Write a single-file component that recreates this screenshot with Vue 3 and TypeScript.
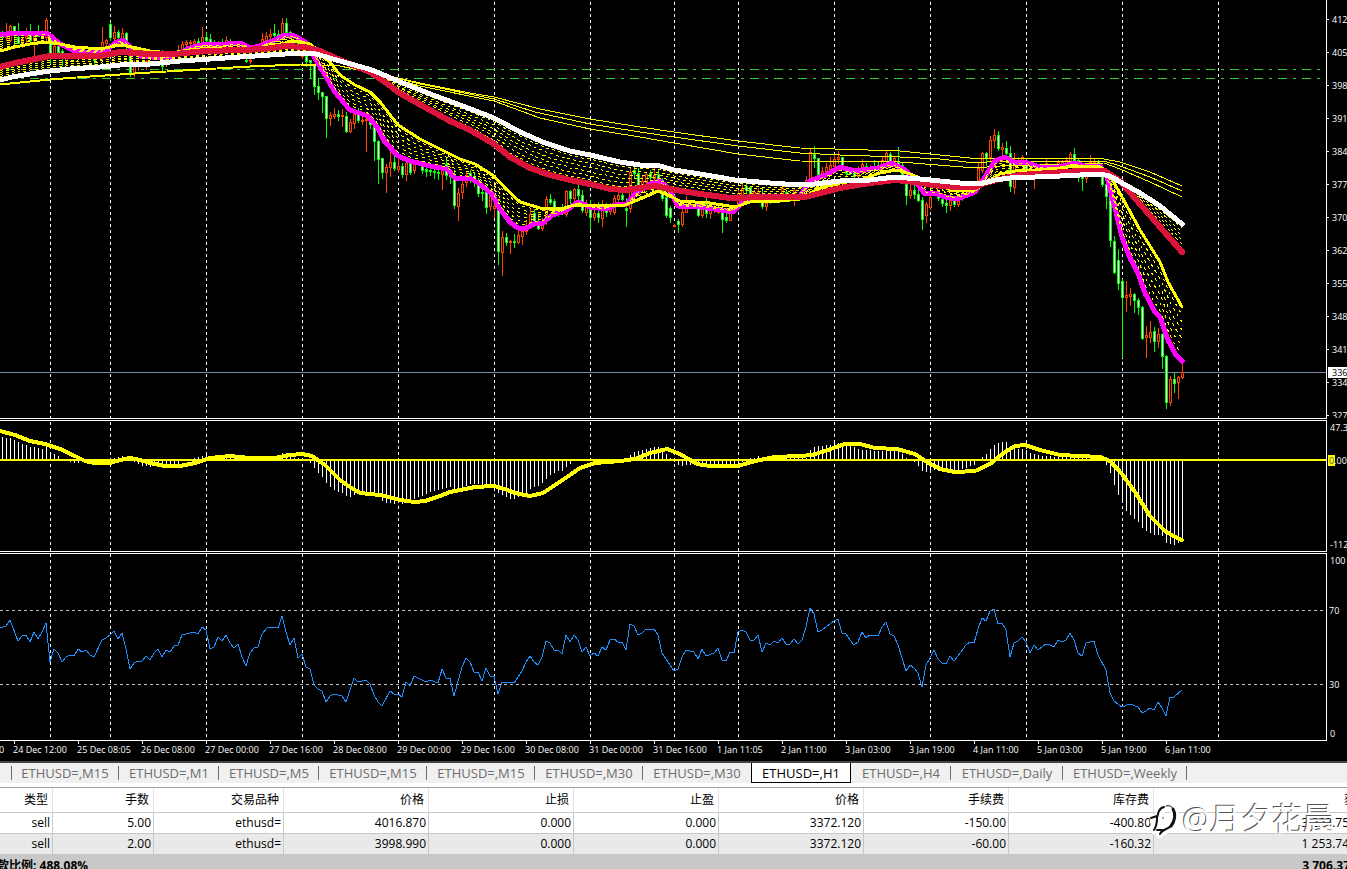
<script setup lang="ts">
type Point = [number, number]

const parse = (source: string): Point[] =>
  source.trim().split(/\s+/).map((pair) => pair.split(',').map(Number) as Point)

const valueAt = (points: Point[], x: number): number => {
  for (let i = 1; i < points.length; i++) {
    const [x0, y0] = points[i - 1]
    const [x1, y1] = points[i]
    if (x <= x1) return y0 + ((y1 - y0) * (x - x0)) / (x1 - x0)
  }
  return points[points.length - 1][1]
}

const toLine = (points: Point[]): string => points.map(([x, y]) => `${x},${y}`).join(' ')

const between = (a: Point[], b: Point[], share: number): string => {
  const points: Point[] = []
  for (let x = 0; x <= 1182; x += x === 0 ? 2 : 4) {
    const ya = valueAt(a, x)
    points.push([x, Math.round(ya + (valueAt(b, x) - ya) * share)])
  }
  return toLine(points)
}

const sessions = [50, 110, 206, 302, 398, 494, 590, 674, 738, 834, 930, 1026, 1122, 1218]

const white = parse(`0,80 12,77 30,74 50,71 70,69 100,67 120,65 150,64 180,61 210,59 240,57 270,55 300,53 316,54 340,61 372,70
398,81 430,94 460,105 494,118 520,132 545,143 570,151 590,155 620,162 640,165 660,166 674,170 700,174 735,180 770,183 800,185
815,184 840,181 870,180 895,177 920,179 940,181 960,183 980,184 995,180 1010,178 1060,176 1100,174 1110,176 1122,183 1140,193 1160,206 1182,224`)
const red = parse(`0,67 15,63 30,60 50,56 100,56 120,52 150,54 175,54 205,51 240,50 265,49 285,46 305,47 320,51 340,60 370,72 385,82
398,92 410,99 430,110 450,121 470,130 494,144 510,157 530,168 550,175 570,180 590,184 610,189 625,190 640,188 655,186 670,189
700,194 730,198 765,197 805,197 825,192 840,188 870,183 895,180 915,182 940,186 960,187 975,187 985,183 1000,179 1020,175
1050,173 1080,171 1105,171 1120,181 1140,204 1160,227 1182,252`)
const yellow = parse(`0,51 15,47 30,44 45,42 60,44 75,47 100,49 120,45 132,47 150,51 170,53 190,50 205,49 230,48 260,48 280,44
295,41 310,44 320,52 330,62 340,75 355,85 370,92 380,102 398,125 420,139 440,149 460,159 475,164 494,176 505,188 520,202 540,208
560,209 575,205 590,205 610,206 625,205 645,197 658,191 672,197 680,201 710,203 735,207 750,202 780,201 800,199 820,188 840,183
860,180 880,173 897,170 910,174 925,180 940,185 950,190 960,191 975,190 985,183 1000,174 1015,171 1035,170 1060,168 1075,166
1100,167 1108,172 1122,197 1140,230 1160,262 1168,282 1182,307`)
const magenta = parse(`0,35 15,33 30,34 47,33 60,44 75,51 95,53 108,49 115,43 123,40 128,45 140,56 165,58 175,55 190,48 205,44
215,45 240,43 250,48 260,46 275,40 285,35 293,35 305,42 313,55 325,75 335,92 350,110 368,116 378,128 385,142 398,156 410,161
430,166 447,169 455,178 470,178 480,184 492,194 500,209 510,222 518,228 527,228 535,223 543,223 552,215 565,211 578,202 590,207
607,209 615,205 627,204 635,194 650,184 660,181 668,188 678,206 700,207 715,209 733,212 745,200 770,198 800,196 810,181 828,174
840,167 855,171 878,168 892,163 905,170 915,181 925,194 935,193 945,197 957,199 975,192 985,177 995,161 1005,157 1015,163
1025,162 1040,167 1055,168 1075,163 1085,166 1100,166 1107,177 1115,208 1122,237 1130,258 1138,273 1145,293 1155,312 1160,317
1168,340 1176,355 1182,361`)

const slowLines = [
  `0,84 30,81 50,79 90,76 150,73 200,70 250,67 300,64 340,66 385,75 420,83 470,93 494,97 540,109 590,119 640,127 674,132 738,141
800,148 835,149 900,151 940,155 970,158 1030,158 1104,159 1120,162 1150,172 1182,186`,
  `0,84 30,81 50,79 90,76 150,72 200,69 250,66 300,64 340,66 385,75 420,84 494,99 535,112 590,124 640,132 674,137 738,146 800,153
840,155 900,157 940,159 975,163 1000,161 1104,161 1120,166 1150,177 1182,191`,
  `0,85 30,82 50,80 90,77 150,73 200,70 250,67 300,65 340,66 385,76 420,86 494,101 540,118 590,129 640,137 674,143 738,154 800,161
900,162 975,168 1000,166 1104,163 1120,169 1150,182 1182,197`,
].map((source) => toLine(parse(source)))

const fastRibbon = [1, 2, 3, 4, 5, 6].map((n) => between(magenta, yellow, n / 7))
const slowRibbon = [1, 2, 3, 4, 5, 6].map((n) => between(white, red, n / 7))

// x, direction, high, body top, body bottom, low
const candles = `2g31,33,37,38 6r23,34,37,40 10r25,26,40,41 14g26,26,35,45 18g23,37,43,43 22r37,39,43,47 26r28,36,38,42 30g24,34,40,43
34r32,32,40,55 38g25,32,36,36 42r30,31,37,38 46r18,20,37,40 50g38,40,56,63 54r45,46,56,57 58g42,46,52,54 62g49,51,56,65 66r55,56,60,65
94g55,56,60,65 102r27,42,50,50 106r39,40,43,46 110g22,24,37,40 114r26,32,38,42 118g30,32,37,41 122r28,33,39,42 126g32,33,42,48
130g50,56,72,76 134r60,66,72,76 138r60,62,66,70 146r60,61,66,69 162g50,60,66,72 166r60,60,63,66 178r45,50,53,55 182r41,44,50,53
186r40,42,44,48 190r40,42,43,45 194r39,41,43,46 198g38,41,43,46 202r27,37,43,57 206g32,37,40,44 210g34,39,43,46 214g40,42,44,44
218r41,42,44,45 222g39,42,44,44 226r36,40,44,46 230g39,41,44,44 246g55,60,61,62 250r55,60,61,63 262r33,39,46,48 266r32,36,40,44
270r29,34,36,39 274g24,33,35,37 278g30,34,35,37 282r18,23,34,38 286g18,23,32,35 290g31,32,36,37 294r34,35,37,38 298g35,36,50,54
302r50,52,56,58 306g53,56,61,66 310g60,60,62,77 314g65,65,86,94 318g79,86,92,99 322g92,92,96,112 326g96,96,118,137 330r112,115,118,125
334r108,114,116,118 338g110,114,116,120 342r109,115,116,126 346g112,116,131,132 350r119,122,131,132 354r112,114,123,128
358g108,112,120,122 362r117,120,121,124 366r117,119,120,151 370g118,120,124,128 374g124,124,141,160 378g140,141,159,183
382g158,158,172,178 386r164,167,172,192 390r150,162,167,176 394g153,162,168,170 398r158,166,169,172 402g163,166,174,177
406r160,163,174,180 410g160,163,172,174 414r160,163,170,173 418r160,161,163,164 422g163,166,170,173 426g165,169,171,176
430g168,170,171,175 434g166,171,172,178 438g165,172,173,179 442r168,170,174,189 446g158,164,175,179 450g170,172,176,183
454g170,179,205,208 458r188,193,206,220 462r178,184,192,198 466r171,175,182,186 470g170,173,177,182 474g172,176,182,186
478g178,180,193,196 482g186,192,193,200 486g188,192,207,213 490r190,195,206,210 494r198,206,208,217 498g200,210,251,264
502r231,237,252,275 506g233,237,242,245 510r240,241,242,253 514g234,241,242,247 518r228,235,242,243 522r226,231,236,244
526r221,225,231,234 530r208,214,222,225 534g209,213,224,226 538g215,225,228,229 542r218,222,228,230 546r196,199,220,224
550g194,199,202,204 554g199,201,212,215 558g208,210,213,216 562g204,210,213,214 566r190,191,214,216 570g190,191,198,203
574r188,189,198,203 578g185,189,195,200 582g190,195,210,212 586r200,205,212,215 590g200,205,217,229 594r203,213,217,220
598g202,213,217,222 602r200,205,218,226 606g203,208,212,216 610r203,208,211,214 614r195,198,212,214 618r190,195,199,201
622g192,195,199,200 626g198,208,210,226 630r167,172,208,212 634g166,170,173,178 638g168,173,185,187 642r176,181,184,186
646r172,174,182,187 650g170,173,177,180 654r168,175,178,180 658g170,174,182,183 662g178,180,198,200 666g194,197,215,217
670g206,208,217,222 674r224,225,226,226 678g219,221,224,232 682r205,212,224,226 686r196,205,212,212 698g206,207,215,216
702r202,207,215,217 706g194,204,213,217 710r207,210,213,218 714r204,207,210,212 718r208,209,212,213 722g209,212,219,232
726g213,217,220,222 730r211,213,220,220 734r205,208,212,213 738r190,193,203,206 742r184,188,200,202 746g184,186,190,192
750g186,187,200,202 754r190,192,196,200 758r188,191,196,200 762g188,200,206,208 766r200,203,206,210 770g195,197,201,203
782r183,188,194,196 786g190,192,195,196 794r188,190,198,205 806r176,180,188,190 810r148,152,184,186 814g146,154,158,167
818g158,158,174,176 822r167,171,174,176 826r163,167,171,174 830r157,165,169,172 834r154,159,166,169 838r151,157,159,163
842g157,157,166,168 846g168,170,173,175 850g168,170,173,174 854g172,173,176,178 858r166,170,176,178 862r159,164,168,171
866g163,166,168,171 870r165,167,170,171 874g160,166,170,171 878g162,165,168,169 882r156,160,168,170 886r150,153,161,164
890g152,154,164,166 894r156,158,162,163 898g147,162,164,165 902g163,165,174,176 906g182,184,195,204 910r184,190,195,198
914g184,190,194,198 918g190,194,200,201 922g197,200,219,229 926r202,204,215,222 930r195,197,207,209 938g190,194,198,200
942g195,199,203,206 946g200,203,205,212 950r196,200,205,210 954g196,200,204,206 958r195,201,204,206 962r190,194,198,200
970r182,184,188,190 978r163,168,180,182 982r152,153,170,172 986g152,153,157,165 990r136,140,157,160 994r129,135,140,147
998g131,135,148,150 1002r143,147,149,154 1006g141,148,153,157 1010g146,153,186,191 1014r153,161,187,193 1018r157,160,164,165
1022r155,157,160,166 1026g158,162,170,172 1030g168,172,174,176 1034r170,172,178,188 1046r159,163,166,168 1054g166,168,171,172
1058r160,162,166,168 1062r160,162,165,166 1066r157,160,164,166 1070r152,154,162,165 1074g148,154,160,163 1078g158,160,175,181
1082g168,174,178,190 1086r170,174,178,182 1090r155,162,168,170 1094r158,161,162,166 1098g160,161,168,170 1102g170,174,184,186
1106g184,184,196,208 1110g195,196,240,246 1114g236,241,272,273 1118g249,260,283,289 1122g279,281,297,357 1126r281,295,297,311
1130r288,294,296,305 1134g293,294,300,312 1138g298,300,307,314 1142g306,307,338,339 1146r326,335,337,357 1150r321,332,337,342
1154g327,331,341,351 1158r328,334,341,347 1162g333,334,356,368 1166g355,356,402,408 1170r376,379,402,405 1174g373,379,383,392
1178r376,377,382,398 1182r361,372,377,378`
  .split(/\s+/)
  .map((entry) => {
    const [, x, dir, rest] = entry.match(/^(\d+)([gr])(.*)$/) as RegExpMatchArray
    const [high, top, bottom, low] = rest.split(',').map(Number)
    return { x: Number(x), up: dir === 'r', high, top, bottom, low }
  })

const box = (x: number, y: number, w: number, h: number): string => `M${x} ${y}h${w}v${h}h${-w}z`

const shapes = (up: boolean): string =>
  candles
    .filter((c) => c.up === up)
    .map((c) => box(c.x, c.high, 1, c.low - c.high + 1) + box(c.x - 1, c.top, 3, c.bottom - c.top + 1))
    .join('')

const cores = (up: boolean): string =>
  candles
    .filter((c) => c.up === up && c.bottom - c.top > 1)
    .map((c) => box(c.x, c.top + 1, 1, c.bottom - c.top - 1))
    .join('')

const momentum = parse(`2,437 6,438 10,438 14,440 18,442 22,444 26,445 30,447 34,447 38,448 42,449 46,446 50,452 54,454 58,456 62,459
66,460 70,462 74,463 78,463 82,462 90,461 110,459 114,458 118,457 122,456 126,458 130,460 134,462 138,464 142,466 146,466 150,467
154,465 158,464 178,464 182,461 190,459 194,458 198,457 202,456 206,452 210,456 240,458 270,458 274,456 278,455 282,453 286,453
290,457 302,459 306,461 310,463 314,468 318,473 322,477 326,483 330,487 334,490 338,492 342,493 346,496 350,497 354,495 358,493
362,492 378,496 382,501 386,503 390,503 394,504 398,503 402,504 406,503 410,501 414,499 418,497 422,496 426,494 430,492 434,491
438,490 442,489 446,488 450,487 454,489 458,489 462,488 466,486 470,484 478,484 494,487 498,493 502,495 506,497 510,499 514,499
518,497 522,495 526,493 530,489 534,487 538,486 542,483 546,479 550,475 554,473 558,471 562,471 566,467 570,464 574,461 578,460
626,460 630,455 634,452 638,451 642,450 646,449 650,448 654,447 658,447 662,450 666,454 670,458 674,462 678,465 682,466 686,465
702,464 738,464 746,460 750,458 754,458 758,456 762,458 806,458 810,450 814,447 818,446 830,445 834,440 838,443 842,443 846,444
850,445 854,447 858,449 862,450 882,451 898,451 902,454 906,458 910,461 914,462 918,466 922,471 926,472 930,472 934,470 938,471
942,472 946,472 950,471 954,471 958,470 962,469 966,468 970,466 974,465 978,460 982,457 986,454 990,449 994,445 998,443 1002,442
1006,442 1010,446 1014,447 1018,449 1022,449 1026,450 1030,453 1034,454 1038,455 1042,456 1080,458 1098,459 1102,461 1106,465
1110,473 1114,485 1118,495 1122,503 1126,511 1130,515 1134,519 1138,522 1142,528 1146,531 1150,533 1154,535 1158,535 1162,536
1166,543 1170,544 1174,545 1178,543 1182,540`)

const histogram = Array.from({ length: 296 }, (_, i) => {
  const x = 2 + i * 4
  const y = Math.round(valueAt(momentum, x)) - 421
  return box(x, Math.min(y, 39), 1, Math.abs(y - 39))
}).join('')

const signal = toLine(parse(`0,431 15,435 30,441 45,444 60,449 75,456 85,461 95,463 110,463 120,460 130,458 140,460 150,463 165,466
180,466 195,463 210,458 230,456 250,458 275,458 290,455 302,454 312,456 325,465 340,480 350,487 360,493 380,495 400,500 415,502
425,501 440,496 450,492 475,487 494,486 505,489 515,493 530,496 543,493 555,485 570,475 580,468 595,463 620,461 635,459 650,453
667,449 680,454 697,464 710,466 738,466 755,461 775,457 800,456 812,455 825,451 845,444 860,444 875,448 897,449 915,454 927,462
940,469 955,472 975,471 990,464 1005,452 1015,446 1025,445 1040,450 1060,455 1100,457 1110,461 1122,474 1135,492 1150,516
1165,531 1175,537 1182,540`).map(([x, y]) => [x, y - 421] as Point))

const strength = toLine(parse(`0,628 6,626 10,620 18,641 22,636 26,635 30,642 34,632 38,639 42,632 46,623 50,662 54,649 58,653 62,662
66,657 70,655 74,656 78,649 82,652 86,650 90,655 94,657 102,640 106,638 110,635 114,631 118,639 122,633 126,649 130,669 134,663
138,661 142,661 146,656 150,660 154,653 158,649 162,657 166,650 170,652 174,646 178,645 182,635 190,633 194,632 198,634 202,627
206,630 210,649 214,647 218,637 222,641 226,635 230,643 234,648 238,644 242,657 246,666 250,653 254,648 258,647 262,634 268,627
278,628 282,616 286,632 290,645 294,638 298,658 302,654 306,667 310,669 314,685 318,689 322,691 326,702 330,696 334,694 342,696
346,702 354,678 358,682 366,680 370,684 374,695 378,702 382,706 390,691 394,694 398,694 402,697 406,682 410,686 414,676 418,678
422,680 426,682 430,680 438,683 442,669 446,678 450,678 454,696 462,667 466,658 470,662 474,672 478,672 482,681 486,668 490,676
494,676 498,694 502,682 514,683 522,671 526,662 530,656 534,662 538,665 542,657 546,641 550,643 554,650 558,650 562,654 566,635
570,642 574,635 578,640 582,652 586,647 590,656 594,653 598,656 602,647 606,650 610,640 614,639 618,642 622,642 626,650 630,624
634,626 638,635 642,633 646,629 654,629 658,635 662,653 666,659 670,665 674,671 678,669 682,657 686,650 694,652 698,659 702,649
706,656 714,653 718,648 722,660 726,661 730,652 734,653 738,632 742,630 746,632 750,640 754,640 758,635 762,652 766,643 770,645
774,641 778,643 782,638 786,644 790,644 794,639 798,644 802,640 806,627 810,608 814,614 818,632 822,630 834,621 838,619 842,633
846,634 850,640 854,645 858,642 862,632 866,638 870,635 878,636 882,627 886,622 890,634 894,636 898,645 902,658 906,671 910,665
914,668 918,673 922,687 926,665 930,658 934,650 938,659 942,663 946,664 950,656 954,661 958,656 966,645 970,642 974,643 978,629
982,618 986,621 990,611 994,609 998,624 1002,623 1006,630 1010,657 1014,643 1018,641 1022,637 1026,642 1030,653 1034,645 1038,650
1042,647 1046,644 1050,645 1054,647 1058,640 1062,642 1066,640 1070,633 1074,640 1078,653 1082,656 1086,643 1090,642 1094,641
1098,655 1106,670 1110,693 1114,701 1122,707 1130,704 1138,707 1142,713 1146,711 1150,708 1154,710 1158,702 1162,708 1166,716
1170,697 1174,697 1182,690`).map(([x, y]) => [x, y - 554] as Point))

const prices = ['412', '405', '398', '391', '384', '377', '370', '362', '355', '348', '341', '334', '327']
const times = [
  '24 Dec 12:00', '25 Dec 08:05', '26 Dec 08:00', '27 Dec 00:00', '27 Dec 16:00', '28 Dec 08:00', '29 Dec 00:00',
  '29 Dec 16:00', '30 Dec 08:00', '31 Dec 00:00', '31 Dec 16:00', '1 Jan 11:05', '2 Jan 11:00', '3 Jan 03:00',
  '3 Jan 19:00', '4 Jan 11:00', '5 Jan 03:00', '5 Jan 19:00', '6 Jan 11:00',
]
const tabs = [
  { name: 'M15', size: 'wide' },
  { name: 'M1', size: 'narrow' },
  { name: 'M5', size: 'narrow' },
  { name: 'M15', size: 'wide' },
  { name: 'M15', size: 'wide' },
  { name: 'M30', size: 'wide' },
  { name: 'M30', size: 'wide' },
  { name: 'H1', size: 'narrow' },
  { name: 'H4', size: 'narrow' },
  { name: 'Daily', size: 'long' },
  { name: 'Weekly', size: 'longest' },
]
const activeTab = 7

const headings = ['类型', '手数', '交易品种', '价格', '止损', '止盈', '价格', '手续费', '库存费', '获利']
const orders = [
  ['sell', '5.00', 'ethusd=', '4016.870', '0.000', '0.000', '3372.120', '-150.00', '-400.80', '3 223.75'],
  ['sell', '2.00', 'ethusd=', '3998.990', '0.000', '0.000', '3372.120', '-60.00', '-160.32', '1 253.74'],
]
</script>

<template>
  <main class="terminal">
    <section class="charts">
      <div class="pane pane-price">
        <svg class="plot" height="418" shape-rendering="crispEdges">
          <line v-for="x in sessions" :key="x" class="session" :x1="x + 0.5" :x2="x + 0.5" y1="2" y2="418" />
          <line class="order-line" x1="-18" x2="1320" y1="69.5" y2="69.5" />
          <line class="order-line" x1="-18" x2="1320" y1="78.5" y2="78.5" />
          <line class="bid-line" x1="0" x2="100%" y1="372.5" y2="372.5" />
          <path :d="shapes(false)" fill="#00ff00" />
          <path :d="cores(false)" fill="#ffffff" />
          <path :d="shapes(true)" fill="#ff4500" />
          <path :d="cores(true)" fill="#000000" />
          <polyline v-for="(line, i) in slowLines" :key="'s' + i" class="thin" :points="line" />
          <polyline class="magenta" :points="toLine(magenta)" />
          <polyline v-for="(line, i) in fastRibbon" :key="'f' + i" class="ribbon-fast" :points="line" />
          <polyline class="yellow" :points="toLine(yellow)" />
          <polyline v-for="(line, i) in slowRibbon" :key="'r' + i" class="ribbon-slow" :points="line" />
          <polyline class="red" :points="toLine(red)" />
          <polyline class="white" :points="toLine(white)" />
        </svg>
        <svg class="axis" width="20" height="418">
          <g v-for="(price, i) in prices" :key="price">
            <rect x="0" :y="19 + i * 33" width="2" height="1" fill="#fff" />
            <text x="5" :y="23 + i * 33">{{ price }}</text>
          </g>
          <rect x="1" y="367" width="19" height="11" fill="#fff" />
          <text x="5" y="376" class="bid-label">336</text>
        </svg>
      </div>

      <div class="pane pane-momentum">
        <svg class="plot" height="130" shape-rendering="crispEdges">
          <line v-for="x in sessions" :key="x" class="session" :x1="x + 0.5" :x2="x + 0.5" y1="1" y2="130" />
          <path :d="histogram" fill="#fff" />
          <rect x="0" y="38" width="100%" height="2" fill="#ff0" />
          <polyline class="signal" :points="signal" />
        </svg>
        <svg class="axis" width="20" height="130">
          <text x="3" y="10">47.3</text>
          <rect x="1" y="34" width="7" height="11" fill="#ff0" />
          <text x="2" y="43"><tspan fill="#555">0</tspan>.00</text>
          <text x="3" y="127">-112</text>
        </svg>
      </div>

      <div class="pane pane-strength">
        <svg class="plot" height="186" shape-rendering="crispEdges">
          <line v-for="x in sessions" :key="x" class="session" :x1="x + 0.5" :x2="x + 0.5" y1="0" y2="184" />
          <line class="level" x1="0" x2="100%" y1="56.5" y2="56.5" />
          <line class="level" x1="0" x2="100%" y1="130.5" y2="130.5" />
          <polyline class="strength" :points="strength" />
        </svg>
        <svg class="axis" width="20" height="186">
          <text x="3" y="10">100</text>
          <text x="2" y="60">70</text>
          <text x="2" y="134">30</text>
          <text x="3" y="183">0</text>
        </svg>
      </div>

      <svg class="time-axis" height="20">
        <text x="-1" y="12">0</text>
        <g v-for="(time, i) in times" :key="time">
          <rect :x="14 + i * 64" y="0" width="1" height="3" fill="#fff" />
          <text :x="13 + i * 64" y="12">{{ time }}</text>
        </g>
      </svg>
    </section>

    <nav class="tabs">
      <button
        v-for="(tab, i) in tabs"
        :key="i"
        type="button"
        class="tab"
        :class="[tab.size, { active: i === activeTab, before: i === activeTab - 1 }]"
      >ETHUSD=,{{ tab.name }}</button>
    </nav>

    <section class="orders">
      <table>
        <colgroup>
          <col class="col-type" />
          <col class="col-lots" />
          <col class="col-symbol" />
          <col v-for="n in 6" :key="n" class="col-value" />
          <col class="col-profit" />
        </colgroup>
        <thead>
          <tr>
            <th v-for="(heading, i) in headings" :key="i" scope="col">{{ heading }}</th>
          </tr>
        </thead>
        <tbody>
          <tr v-for="(order, r) in orders" :key="r">
            <td v-for="(cell, c) in order" :key="c">{{ cell }}</td>
          </tr>
        </tbody>
        <tfoot>
          <tr>
            <td colspan="9" class="margin-level">款比例: 488.08%</td>
            <td>3 706.37</td>
          </tr>
        </tfoot>
      </table>
      <div class="watermark">
        <svg width="30" height="38" viewBox="0 0 30 38" fill="none" stroke-linecap="round">
          <g stroke="#fff" stroke-width="8">
            <path d="M14 6C9 8 9 13 8 18C7 23 6 26 4 28M1 17L8 14" />
            <path d="M17 5C27 6 27 17 22 23C19 28 12 28 10 32" />
          </g>
          <g stroke="#111">
            <path stroke-width="2" d="M14 5C9 6 8 11 7 16C7 22 6 25 4 28M1 16L7 14" />
            <path stroke-width="1" d="M16 4C19 3 22 4 23 7" />
            <path stroke-width="3" d="M23 7C26 12 25 19 21 24" />
            <path stroke-width="2" d="M21 24C17 28 12 27 10 32M7 28L12 28" />
            <circle cx="13" cy="16" r="1" stroke="none" fill="#888" />
          </g>
        </svg>
        <span>@月夕花晨</span>
      </div>
    </section>
  </main>
</template>

<style>
body {
  margin: 0;
  background: #c8c8c8;
}
</style>

<style scoped>
.terminal {
  height: 100vh;
  overflow: hidden;
  font-family: "Open Sans", "Noto Sans CJK SC", sans-serif;
  color: #000;
}
.charts {
  background: #000;
  font-size: 9px;
}
.pane {
  display: flex;
  background: #000;
}
.pane-price,
.pane-momentum {
  margin-bottom: 1px;
}
.plot {
  display: block;
  flex: 1;
  min-width: 0;
  border-right: 1px solid #fff;
  border-bottom: 1px solid #fff;
}
.pane-momentum .plot,
.pane-strength .plot {
  border-top: 1px solid #fff;
}
.axis {
  display: block;
  flex: none;
}
.pane-momentum .axis,
.pane-strength .axis {
  margin-top: 1px;
}
text {
  fill: #fff;
  stroke: none;
}
text.bid-label {
  fill: #000;
}
.time-axis {
  display: block;
  width: 100%;
}
.session {
  stroke: #fff;
  stroke-dasharray: 3 3;
}
.level {
  stroke: #c0c0c0;
  stroke-dasharray: 3 3;
}
.order-line {
  stroke: #32cd32;
  stroke-dasharray: 9 6 3 6;
}
.bid-line {
  stroke: #778899;
}
polyline {
  fill: none;
  stroke-linejoin: round;
}
.thin {
  stroke: #ff0;
  stroke-width: 1;
}
.ribbon-fast {
  stroke: #ff0;
  stroke-dasharray: 3 4;
}
.ribbon-slow {
  stroke: #ff0;
  stroke-dasharray: 3 3;
}
.magenta {
  stroke: #f0f;
  stroke-width: 5;
  stroke-linecap: round;
}
.yellow {
  stroke: #ff0;
  stroke-width: 3;
  stroke-linecap: round;
}
.red {
  stroke: #dc143c;
  stroke-width: 6;
  stroke-linecap: round;
}
.white {
  stroke: #fff;
  stroke-width: 5;
  stroke-linecap: round;
}
.signal {
  stroke: #ff0;
  stroke-width: 4;
  stroke-linecap: round;
}
.strength {
  stroke: #1e90ff;
}
.tabs {
  display: flex;
  height: 20px;
  padding: 0 0 4px 11px;
  border-top: 2px solid #444;
  border-bottom: 1px solid #a0a0a0;
  background: linear-gradient(#f0f0f0 20px, #fff 20px);
}
.tab {
  position: relative;
  box-sizing: border-box;
  flex: none;
  height: 20px;
  margin: 0;
  padding: 0;
  border: 0;
  background: none;
  color: #6d6d6d;
  font: 13px/20px "Open Sans", sans-serif;
  text-align: center;
  white-space: nowrap;
}
.wide {
  width: 108px;
}
.narrow {
  width: 100px;
}
.long {
  width: 112px;
}
.longest {
  width: 124px;
}
.tab::after {
  content: "";
  position: absolute;
  right: 0;
  top: 3px;
  width: 1px;
  height: 14px;
  background: #6d6d6d;
}
.tab:first-child::before {
  content: "";
  position: absolute;
  left: 0;
  top: 3px;
  width: 1px;
  height: 14px;
  background: #6d6d6d;
}
.tab.before::after,
.tab.active::after {
  display: none;
}
.tab.active {
  border: 1px solid #000;
  border-top: 0;
  background: #fff;
  color: #000;
}
.orders {
  position: relative;
  overflow: hidden;
  background: #c8c8c8;
}
table {
  width: 1352px;
  table-layout: fixed;
  border-collapse: separate;
  border-spacing: 0;
  font-size: 12px;
  line-height: 20px;
}
.col-type {
  width: 53px;
}
.col-lots {
  width: 101px;
}
.col-symbol {
  width: 130px;
}
.col-value {
  width: 145px;
}
th,
td {
  height: 20px;
  padding: 0 2px 0 0;
  border-right: 1px solid #c8c8c8;
  border-bottom: 1px solid #c8c8c8;
  text-align: right;
  font-weight: 400;
  white-space: nowrap;
}
td {
  box-sizing: border-box;
  height: 21px;
}
th {
  height: 24px;
  padding-right: 4px;
  border-right-color: #e2e2e2;
  line-height: 24px;
  background: #fff;
}
th:last-child {
  padding-left: 190px;
  text-align: left;
}
tbody td {
  background: #fff;
}
tbody tr:nth-child(even) td {
  background: #e9e9e9;
}
tfoot td {
  border: 0;
  background: #c8c8c8;
  font-weight: 700;
}
.margin-level {
  text-align: left;
  text-indent: -3px;
}
.watermark {
  position: absolute;
  top: 14px;
  right: 13px;
  display: flex;
  align-items: flex-start;
  gap: 2px;
  color: #fff;
  font-size: 31px;
  line-height: 32px;
  text-shadow: -1px -1px 0 #555;
}
</style>
